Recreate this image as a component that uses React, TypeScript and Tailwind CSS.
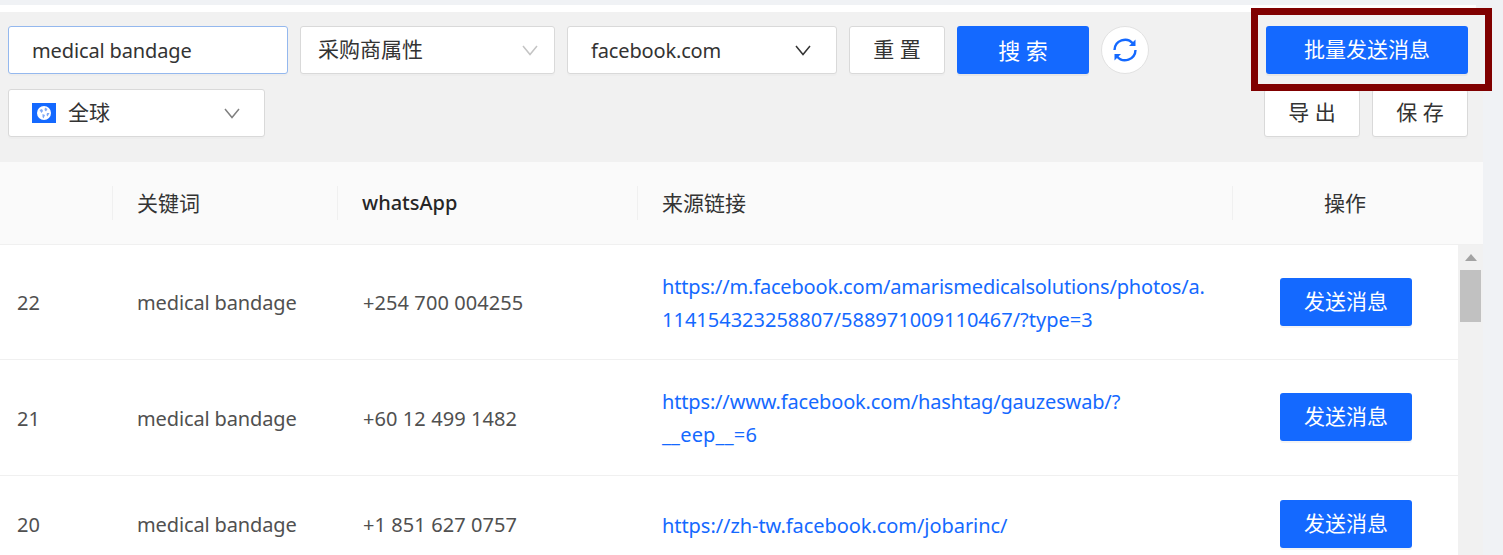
import { ReactNode } from "react";

const FONT = "font-['Noto_Sans','Noto_Sans_CJK_SC',sans-serif]";

const rows = [
  {
    id: "22",
    phone: "+254 700 004255",
    link: [
      { text: "https://m.facebook.com/amarismedicalsolutions/photos/a.", track: "tracking-[-0.18px]" },
      { text: "114154323258807/588971009110467/?type=3", track: "" },
    ],
    height: "h-[115px]",
    linkPad: "pt-[2px]",
    btnPad: "",
  },
  {
    id: "21",
    phone: "+60 12 499 1482",
    link: [
      { text: "https://www.facebook.com/hashtag/gauzeswab/?", track: "tracking-[-0.16px]" },
      { text: "__eep__=6", track: "tracking-[0.2px]" },
    ],
    height: "h-[116px]",
    linkPad: "",
    btnPad: "pb-[2px]",
  },
  {
    id: "20",
    phone: "+1 851 627 0757",
    link: [{ text: "https://zh-tw.facebook.com/jobarinc/", track: "tracking-[-0.06px]" }],
    height: "h-[97px]",
    linkPad: "pt-[2px]",
    btnPad: "",
  },
];

const Chevron = ({ color }: { color: string }) => (
  <svg width="16" height="11" viewBox="0 0 16 11" fill="none" stroke={color} strokeWidth="1.5">
    <path d="M1 1 L8 9.5 L15 1" />
  </svg>
);

const GlobeFlag = () => (
  <svg width="24" height="20" viewBox="0 0 24 20">
    <rect width="24" height="20" fill="#1469ff" />
    <circle cx="12" cy="10" r="7" fill="#fff" />
    <path d="M7.5 7 L10 6 L11 8 L9.5 10 Z M13 4.5 L15.5 6 L14 8.5 L12.5 7 Z M10.5 11 L13 12 L11.5 15.5 L10.5 14 Z M15 10 L17.5 10 L15.5 13.5 L14.5 12 Z" fill="#7fa9f5" />
  </svg>
);

const SyncIcon = () => (
  <svg width="26" height="26" viewBox="0 0 26 26" fill="none" stroke="#1469ff" strokeWidth="2.4">
    <path d="M2.5 13 A10.5 10.5 0 0 1 21 6.5" />
    <path d="M23.5 13 A10.5 10.5 0 0 1 5 19.5" />
    <path d="M23.5 2.5 L23.5 9 L17 9 Z" fill="#1469ff" strokeWidth="0" />
    <path d="M2.5 23.5 L2.5 17 L9 17 Z" fill="#1469ff" strokeWidth="0" />
  </svg>
);

const Box = ({ className, border = "border-[#d9d9d9]", children }: { className: string; border?: string; children: ReactNode }) => (
  <div className={`h-12 flex items-center bg-white border ${border} rounded-[3px] shadow-[0_2px_0_rgba(0,0,0,0.015)] ${className}`}>
    {children}
  </div>
);

const WhiteButton = ({ children, className = "w-24" }: { children: ReactNode; className?: string }) => (
  <button className={`h-12 ${className} bg-white border border-[#d9d9d9] rounded-[3px] text-[21px] text-[#333] shadow-[0_2px_0_rgba(0,0,0,0.015)]`}>
    {children}
  </button>
);

const BlueButton = ({ children, className }: { children: ReactNode; className: string }) => (
  <button className={`h-12 ${className} bg-[#1469ff] rounded-[3px] text-white shadow-[0_2px_0_rgba(0,0,0,0.045)]`}>
    {children}
  </button>
);

const HeadCell = ({ children, className = "" }: { children?: ReactNode; className?: string }) => (
  <div className={`relative flex items-center h-full ${className}`}>
    <span className="absolute left-0 top-[24px] h-[34px] w-px bg-[#f0f0f0]" />
    {children}
  </div>
);

export default function App() {
  return (
    <div className={`w-[1503px] h-[555px] overflow-hidden relative bg-[#f0f2f5] ${FONT}`}>
      <div className="w-[1476px] h-[7px] mt-[5px] bg-white" />
      <div className="w-[1483px] bg-white">
        {/* toolbar */}
        <div className="h-[150px] bg-[#f1f1f1] pt-[14px] pl-2 pr-[15px] flex justify-between">
          <div>
            <div className="flex items-center gap-3">
              <Box border="border-[#94b8ee]" className="w-[280px] pl-[23px] pt-[2px] text-[20px] tracking-[-0.13px] text-[#333]">
                medical bandage
              </Box>
              <Box className="w-[255px] pl-[17px] pr-[16px] justify-between text-[21px] text-[#333]">
                采购商属性
                <Chevron color="#c4c4c4" />
              </Box>
              <Box className="w-[270px] pl-[23px] pr-[25px] justify-between text-[20px] text-[#333]">
                <span className="pt-[2px] tracking-[-0.15px]">facebook.com</span>
                <Chevron color="#333333" />
              </Box>
              <WhiteButton>重 置</WhiteButton>
              <BlueButton className="w-[132px] text-[22px]">搜 索</BlueButton>
              <div className="w-12 h-12 rounded-full bg-white border border-[#e2e2e2] flex items-center justify-center">
                <SyncIcon />
              </div>
            </div>
            <div className="mt-[15px]">
              <Box className="w-[257px] pl-[23px] pr-[24px] text-[21px] text-[#333]">
                <GlobeFlag />
                <span className="ml-3">全球</span>
                <span className="ml-auto">
                  <Chevron color="#808080" />
                </span>
              </Box>
            </div>
          </div>
          <div className="flex flex-col items-end">
            <BlueButton className="w-[202px] text-[21px]">批量发送消息</BlueButton>
            <div className="mt-[15px] flex gap-3">
              <WhiteButton>导 出</WhiteButton>
              <WhiteButton>保 存</WhiteButton>
            </div>
          </div>
        </div>

        {/* table header */}
        <div className="h-[83px] bg-[#fafafa] border-b border-[#f0f0f0] grid grid-cols-[112px_225px_300px_595px_251px] text-[21px] text-[#333]">
          <div />
          <HeadCell className="pl-[25px] pt-[2px]">关键词</HeadCell>
          <HeadCell className="pl-[25px] text-[20px] font-medium text-[#262626]">whatsApp</HeadCell>
          <HeadCell className="pl-[25px] pt-[2px]">来源链接</HeadCell>
          <HeadCell className="justify-center pr-[25px] pt-[2px]">操作</HeadCell>
        </div>

        {/* table body */}
        <div className="flex">
          <div className="w-[1458px]">
            {rows.map((row) => (
              <div
                key={row.id}
                className={`${row.height} border-b border-[#f0f0f0] grid grid-cols-[112px_225px_300px_595px_226px] items-center text-[20px] text-[#505050]`}
              >
                <div className="pl-[17px] pt-[2px]">{row.id}</div>
                <div className="pl-[25px] pt-[2px] tracking-[-0.13px]">medical bandage</div>
                <div className="pl-[26px] pt-[2px] tracking-[0.08px]">{row.phone}</div>
                <div className={`pl-[25px] ${row.linkPad} text-[#1469ff] leading-[33px]`}>
                  {row.link.map((line) => (
                    <div key={line.text} className={line.track}>
                      {line.text}
                    </div>
                  ))}
                </div>
                <div className={`flex justify-center pl-[2px] ${row.btnPad}`}>
                  <BlueButton className="w-[132px] text-[21px]">发送消息</BlueButton>
                </div>
              </div>
            ))}
          </div>
          <div className="w-[25px] h-[311px] bg-[#f1f1f1] flex flex-col items-center">
            <span className="mt-[9px] w-0 h-0 border-x-[6px] border-x-transparent border-b-[7px] border-b-[#a3a3a3]" />
            <span className="mt-[9px] w-[21px] h-[52px] bg-[#c1c1c1]" />
          </div>
        </div>
      </div>

      {/* annotation frame */}
      <div className="absolute left-[1251px] top-[8px] w-[241px] h-[83px] border-[7px] border-[#800000]" />
    </div>
  );
}
